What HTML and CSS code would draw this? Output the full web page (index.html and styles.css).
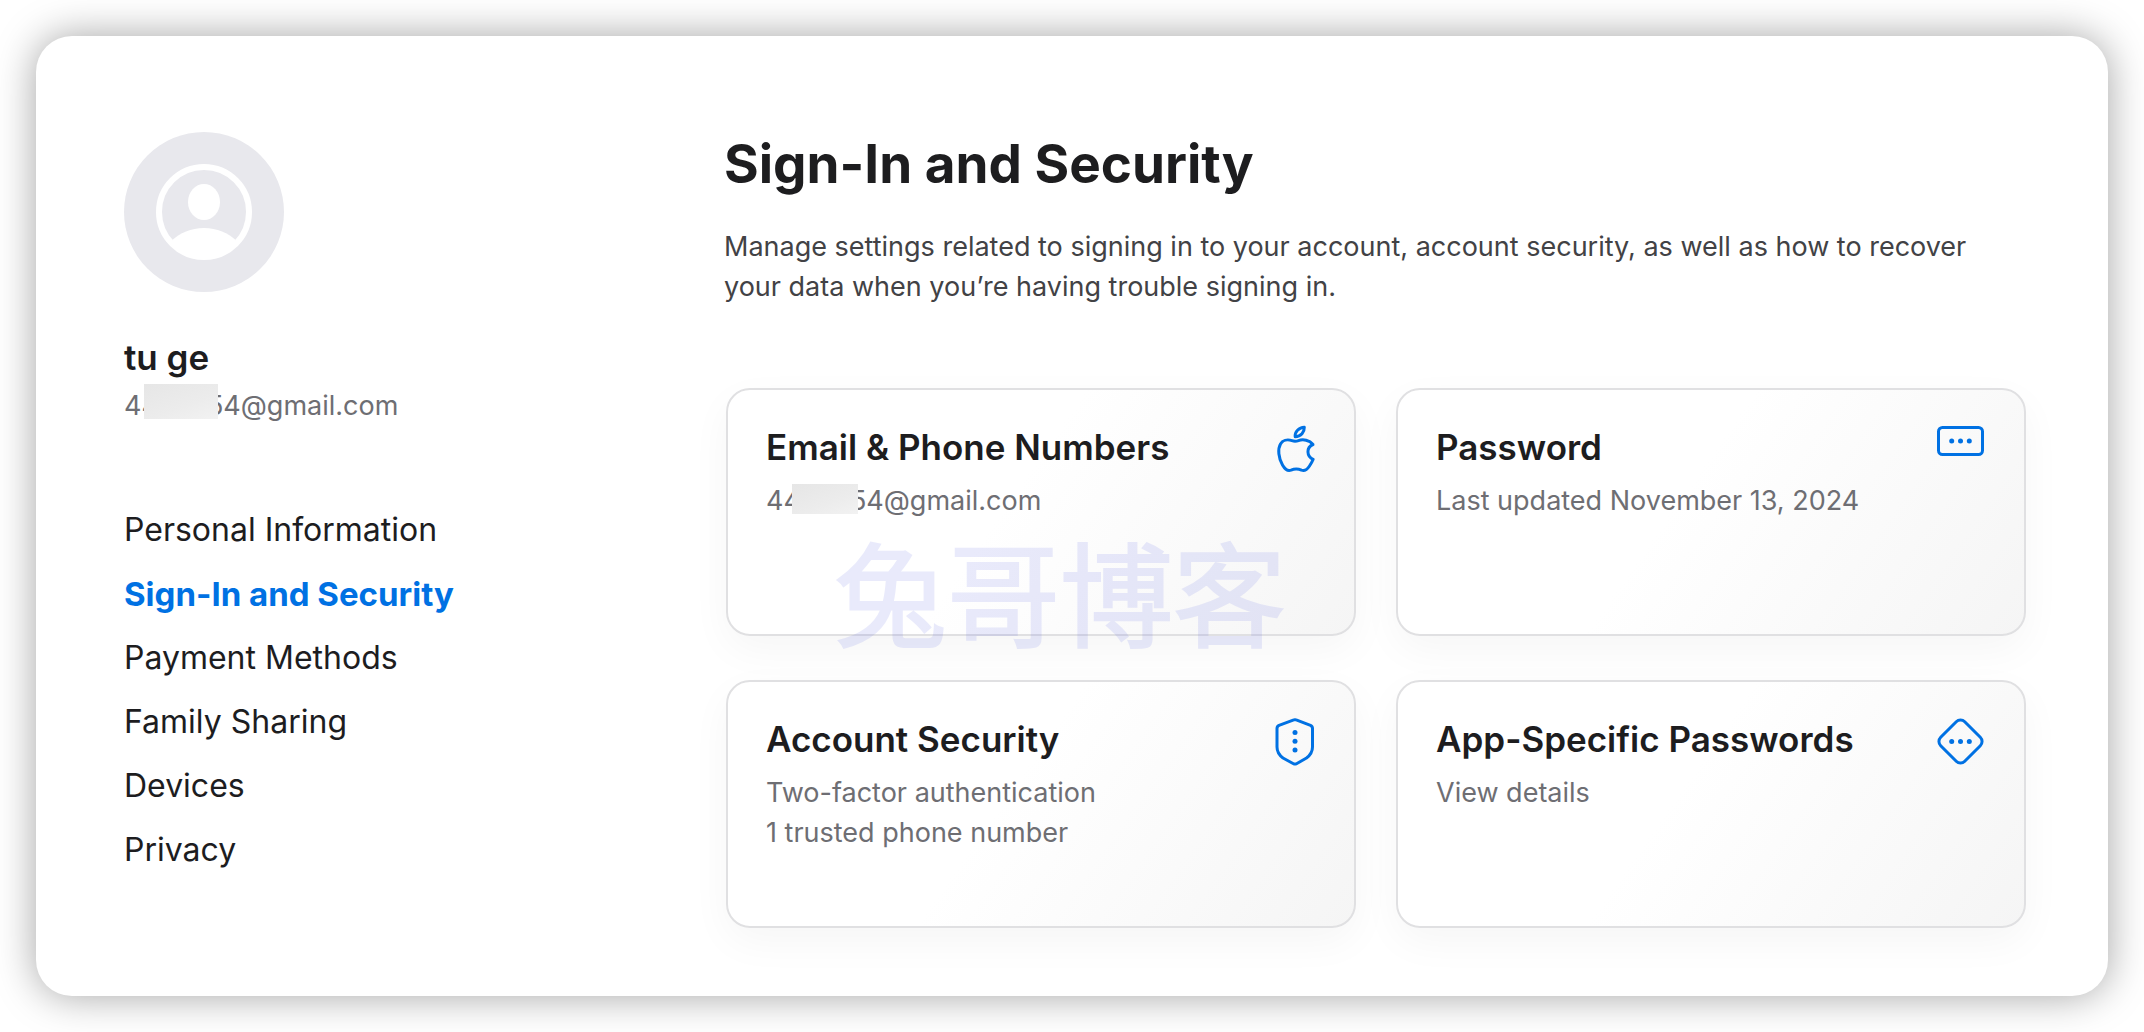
FILE: index.html
```html
<!DOCTYPE html>
<html lang="en">
<head>
<meta charset="utf-8">
<meta name="viewport" content="width=device-width, initial-scale=1">
<title>Sign-In and Security</title>
<link rel="stylesheet" href="styles.css">
</head>
<body>
<div class="panel">
  <aside class="sidebar">
    <svg class="avatar" viewBox="0 0 160 160" aria-hidden="true">
      <circle cx="80" cy="80" r="80" fill="#e8e8ed"/>
      <circle cx="80" cy="80" r="45" fill="none" stroke="#fff" stroke-width="6"/>
      <ellipse cx="80" cy="70" rx="16" ry="18" fill="#fff"/>
      <path d="M47 109C56 101 67 96 80 96s24 5 33 13C105 120 94 127 80 127S55 120 47 109z" fill="#fff"/>
    </svg>
    <p class="name">tu ge</p>
    <p class="detail account">44<span class="redacted"></span>54@gmail.com</p>
    <nav class="nav" aria-label="Account">
      <a href="#personal">Personal Information</a>
      <a href="#security" class="current" aria-current="page">Sign-In and Security</a>
      <a href="#payment">Payment Methods</a>
      <a href="#family">Family Sharing</a>
      <a href="#devices">Devices</a>
      <a href="#privacy">Privacy</a>
    </nav>
  </aside>
  <main class="main">
    <h1>Sign-In and Security</h1>
    <p class="intro">Manage settings related to signing in to your account, account security, as well as how to recover your data when you’re having trouble signing in.</p>
    <div class="cards">
      <button class="card" type="button">
        <span class="text">
          <span class="title">Email &amp; Phone Numbers</span>
          <span class="detail">44<span class="redacted small"></span>54@gmail.com</span>
        </span>
        <svg class="icon" viewBox="0 0 48 48" aria-hidden="true">
          <path d="M46 17.500C42.500 13 36 12 31.500 13.600C28.500 14.700 27.500 14.600 25 13.700C20 12 15.500 13.500 13.500 17C10.500 22 11.500 31 15.500 38C17.500 41.500 20.500 44.500 24 43.200C27.500 41.700 31 41.700 34.500 43.200C38 44.500 40.500 42 42.500 39C44.500 36 45.500 34 46.200 32.300C39.500 29.500 39 20.500 46 17.500z" transform="translate(1 1)"/>
          <path d="M28.200 10.800C27.500 6 32 1.500 37.300 1.300C37.500 6 34 10.800 28.200 10.800z" transform="translate(1 0)"/>
        </svg>
      </button>
      <button class="card" type="button">
        <span class="text">
          <span class="title">Password</span>
          <span class="detail">Last updated November 13, 2024</span>
        </span>
        <svg class="icon" viewBox="0 0 48 48" aria-hidden="true">
          <rect x="2.500" y="1.500" width="44" height="27" rx="4"/>
          <g class="dots"><circle cx="15.700" cy="15" r="2.500"/><circle cx="24.500" cy="15" r="2.500"/><circle cx="33.300" cy="15" r="2.500"/></g>
        </svg>
      </button>
      <button class="card" type="button">
        <span class="text">
          <span class="title">Account Security</span>
          <span class="detail">Two-factor authentication<br>1 trusted phone number</span>
        </span>
        <svg class="icon" viewBox="0 0 48 48" aria-hidden="true">
          <path d="M27.800 1.900Q29 1.400 30.200 1.900L44.500 7.300Q46.500 8.200 46.500 10.500V29C46.500 34 44.500 37 40.500 40L30.500 45.700Q29 46.500 27.500 45.700L17 40C13 37 11 34 11 29V10.500Q11 8.200 13 7.300z"/>
          <g class="dots"><circle cx="29" cy="14.600" r="2.500"/><circle cx="29" cy="23.300" r="2.500"/><circle cx="29" cy="32" r="2.500"/></g>
        </svg>
      </button>
      <button class="card" type="button">
        <span class="text">
          <span class="title">App-Specific Passwords</span>
          <span class="detail">View details</span>
        </span>
        <svg class="icon" viewBox="0 0 48 48" aria-hidden="true">
          <rect x="7.500" y="6.500" width="34" height="34" rx="6" transform="rotate(45 24.500 23.500)"/>
          <g class="dots"><circle cx="15.700" cy="23.500" r="2.500"/><circle cx="24.500" cy="23.500" r="2.500"/><circle cx="33.300" cy="23.500" r="2.500"/></g>
        </svg>
      </button>
      <span class="watermark" lang="zh-CN">兔哥博客</span>
    </div>
  </main>
</div>
</body>
</html>
```
FILE: styles.css
```css
* {
  box-sizing: border-box;
}

body {
  margin: 0;
  padding: 36px;
  background: #fff;
  color: #1d1d1f;
  font-family: Inter, "Liberation Sans", sans-serif;
}

h1,
p {
  margin: 0;
}

.panel {
  display: grid;
  grid-template-columns: minmax(0, 560px) minmax(0, 1fr);
  gap: 40px;
  padding: 96px 80px 68px 88px;
  border-radius: 36px;
  background: #fff;
  box-shadow: 0 0 40px rgba(0, 0, 0, 0.36);
}

.avatar {
  display: block;
  width: 160px;
  height: 160px;
  margin-bottom: 43px;
}

.name {
  margin-bottom: 5px;
  font-size: 35px;
  font-weight: 600;
  line-height: 44px;
}

.detail {
  color: #6e6e73;
  font-size: 27px;
  line-height: 40px;
}

.redacted {
  display: inline-block;
  position: relative;
  width: 74px;
  height: 35px;
  margin: 0 -11px 0 -15px;
  background: linear-gradient(160deg, #e6e6e6, #ececec 60%, #f2f2f2);
  vertical-align: -4px;
}

.redacted.small {
  width: 66px;
  height: 30px;
  margin: 0 -8px 0 -9px;
}

.account {
  height: 40px;
}

.nav {
  display: flex;
  flex-direction: column;
  align-items: flex-start;
  margin-top: 74px;
}

.nav a {
  color: #1d1d1f;
  font-size: 32px;
  line-height: 64px;
  text-decoration: none;
}

.nav .current {
  color: #0071e3;
  font-size: 33px;
  font-weight: 700;
}

h1 {
  margin-bottom: 31px;
  font-size: 53px;
  font-weight: 700;
  line-height: 64px;
}

.intro {
  color: #424245;
  font-size: 27px;
  line-height: 40px;
}

.cards {
  display: grid;
  position: relative;
  grid-template-columns: repeat(2, minmax(0, 1fr));
  gap: 44px 40px;
  margin: 81px 2px 0;
}

.card {
  display: flex;
  align-items: flex-start;
  justify-content: space-between;
  min-height: 248px;
  padding: 36px 40px 36px 38px;
  border: 2px solid #e0e0e2;
  border-radius: 24px;
  background: linear-gradient(125deg, #fff 45%, #f5f5f5);
  box-shadow: 0 14px 40px rgba(0, 0, 20, 0.04);
  color: inherit;
  font: inherit;
  text-align: left;
}

.text,
.title,
.text .detail {
  display: block;
}

.title {
  margin-bottom: 13px;
  font-size: 35px;
  font-weight: 600;
  line-height: 42px;
}

.icon {
  flex: none;
  width: 48px;
  height: 48px;
  overflow: visible;
  fill: none;
  stroke: #0071e3;
  stroke-width: 3;
  stroke-linejoin: round;
}

.dots {
  fill: #0071e3;
  stroke: none;
}

.watermark {
  position: absolute;
  top: 144px;
  left: 108px;
  color: #5a64e6;
  font-family: "Noto Sans CJK SC", sans-serif;
  font-size: 113px;
  font-weight: 400;
  line-height: 114px;
  white-space: nowrap;
  opacity: 0.13;
  pointer-events: none;
  -webkit-text-stroke: 2px #5a64e6;
}
```
